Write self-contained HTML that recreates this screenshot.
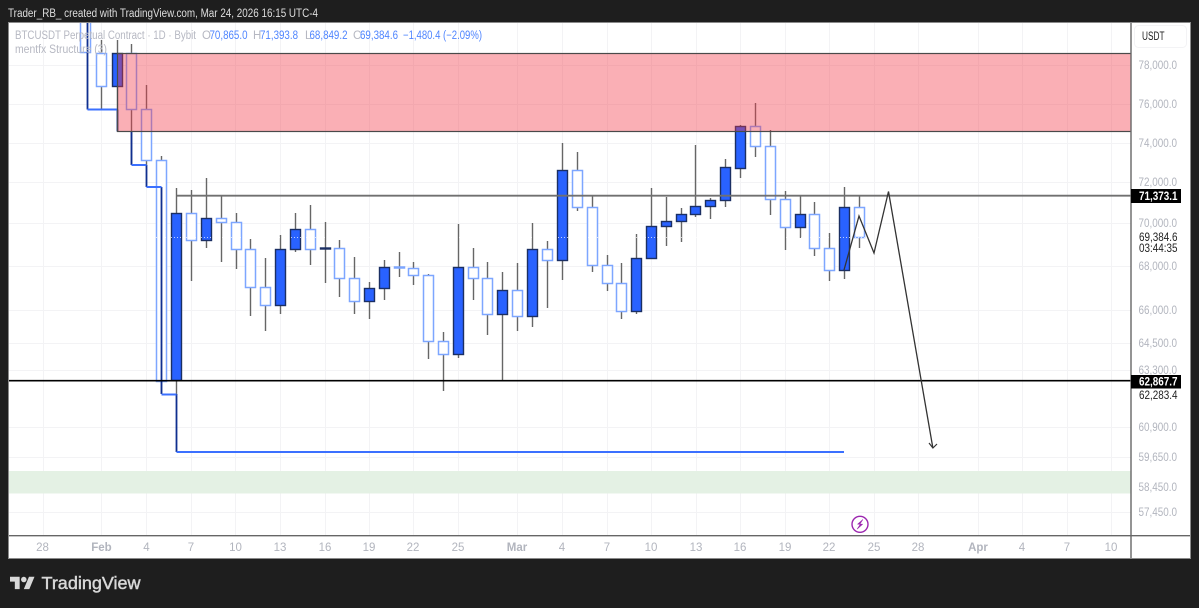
<!DOCTYPE html>
<html>
<head>
<meta charset="utf-8">
<title>BTCUSDT chart</title>
<style>
html,body{margin:0;padding:0;background:#1e1e1e;width:1199px;height:608px;overflow:hidden}
svg{display:block;filter:blur(.3px)}
text{font-family:"Liberation Sans",sans-serif}
.p{font-size:11.5px;fill:#b2b5be}
.t{font-size:11.5px;fill:#b2b5be;text-anchor:middle}
.tb{font-size:11.5px;fill:#b2b5be;text-anchor:middle;font-weight:bold}
.l{font-size:11.5px;fill:#b6b8c2}
.v{font-size:11.5px;fill:#4f85ff}
</style>
</head>
<body>
<svg width="1199" height="608" viewBox="0 0 1199 608" xmlns="http://www.w3.org/2000/svg">
<defs><clipPath id="c"><rect x="9" y="23" width="1122" height="512"/></clipPath></defs>
<rect width="1199" height="608" fill="#1e1e1e"/>
<text x="8" y="17" font-size="11.5" fill="#dedede" textLength="310" lengthAdjust="spacingAndGlyphs">Trader_RB_ created with TradingView.com, Mar 24, 2026 16:15 UTC-4</text>
<rect x="8.5" y="22.5" width="1182" height="536" fill="#fff" stroke="#8a8a8a"/>

<path d="M9 65.5H1131M9 104.5H1131M9 143.5H1131M9 182.5H1131M9 223.5H1131M9 266.5H1131M9 310.5H1131M9 343.5H1131M9 370.5H1131M9 427.5H1131M9 457.5H1131M9 487.5H1131M9 512.5H1131M43.5 23V535M101.5 23V535M146.5 23V535M191.5 23V535M235.5 23V535M280.5 23V535M325.5 23V535M369.5 23V535M413.5 23V535M458.5 23V535M517.5 23V535M562.5 23V535M607.5 23V535M651.5 23V535M696.5 23V535M740.5 23V535M785.5 23V535M829.5 23V535M874.5 23V535M918.5 23V535M978.5 23V535M1022.5 23V535M1067.5 23V535M1111.5 23V535" stroke="#f3f3f5" fill="none"/>

<rect x="9" y="471" width="1122" height="22.5" fill="#e4f1e4"/>

<g clip-path="url(#c)">
<!-- wicks -->
<path d="M101.5 40V109M117.5 40V131M131.5 44V165M146.5 85V165M161.5 156V394M176.5 188V395M191.5 190V281M206.5 178V248M221.5 195V262M236.5 213V269M250.5 239V316M265.5 258V331M280.5 235V314M295.5 213V252M310.5 205V265M325.5 222V283M339.5 240V297M354.5 257V314M369.5 282V319M384.5 260V300M399.5 252V277M413.5 262V285M428.5 274V359M443.5 332V391M458.5 224V358M473.5 248V300M487.5 262V335M502.5 272V380M517.5 263V331M532.5 223V327M547.5 241V308M562.5 143V280M577.5 152V211M592.5 196V272M607.5 255V291M621.5 263V319M636.5 234V314M651.5 188V259M666.5 197V246M681.5 208V242M695.5 145V217M710.5 198V219M725.5 159V207M740.5 125V178M755.5 103V157M770.5 130V215M785.5 191V250M800.5 196V238M814.5 202V256M829.5 233V281M844.5 187V279M859.5 195V248" stroke="#666" stroke-width="1.4" fill="none"/>
<!-- hollow -->
<g fill="#fff" stroke="#7da6ff" stroke-width="1.5">
<rect x="80.5" y="15.5" width="10" height="37"/>
<rect x="96.5" y="53.5" width="10" height="33"/>
<rect x="126.5" y="53.5" width="10" height="56"/>
<rect x="141.5" y="109.5" width="10" height="51"/>
<rect x="156.5" y="160.5" width="10" height="221"/>
<rect x="186.5" y="213.5" width="10" height="27"/>
<rect x="216.5" y="218.5" width="10" height="4"/>
<rect x="231.5" y="222.5" width="10" height="27"/>
<rect x="245.5" y="249.5" width="10" height="38"/>
<rect x="260.5" y="287.5" width="10" height="18"/>
<rect x="305.5" y="229.5" width="10" height="20"/>
<rect x="334.5" y="248.5" width="10" height="30"/>
<rect x="349.5" y="278.5" width="10" height="23"/>
<rect x="394.5" y="267" width="10" height="1"/>
<rect x="408.5" y="268.5" width="10" height="7"/>
<rect x="423.5" y="275.5" width="10" height="66"/>
<rect x="438.5" y="341.5" width="10" height="13"/>
<rect x="468.5" y="267.5" width="10" height="11"/>
<rect x="482.5" y="278.5" width="10" height="36"/>
<rect x="512.5" y="290.5" width="10" height="26"/>
<rect x="542.5" y="249.5" width="10" height="11"/>
<rect x="572.5" y="170.5" width="10" height="37"/>
<rect x="587.5" y="207.5" width="10" height="58"/>
<rect x="602.5" y="265.5" width="10" height="18"/>
<rect x="616.5" y="283.5" width="10" height="28"/>
<rect x="750.5" y="126.5" width="10" height="20"/>
<rect x="765.5" y="146.5" width="10" height="53"/>
<rect x="780.5" y="199.5" width="10" height="28"/>
<rect x="809.5" y="214.5" width="10" height="34"/>
<rect x="824.5" y="248.5" width="10" height="22"/>
<rect x="854.5" y="207.5" width="10" height="30"/>
</g>
<!-- filled -->
<g fill="#2962ff" stroke="#1b2f63" stroke-width="1.4">
<rect x="112.5" y="53.5" width="10" height="33"/>
<rect x="171.5" y="213.5" width="10" height="167"/>
<rect x="201.5" y="218.5" width="10" height="22"/>
<rect x="275.5" y="249.5" width="10" height="56"/>
<rect x="290.5" y="229.5" width="10" height="20"/>
<rect x="320.5" y="248" width="10" height="1"/>
<rect x="364.5" y="288.5" width="10" height="13"/>
<rect x="379.5" y="267.5" width="10" height="21"/>
<rect x="453.5" y="267.5" width="10" height="87"/>
<rect x="497.5" y="290.5" width="10" height="24"/>
<rect x="527.5" y="249.5" width="10" height="67"/>
<rect x="557.5" y="170.5" width="10" height="90"/>
<rect x="631.5" y="258.5" width="10" height="53"/>
<rect x="646.5" y="226.5" width="10" height="32"/>
<rect x="661.5" y="221.5" width="10" height="5"/>
<rect x="676.5" y="214.5" width="10" height="7"/>
<rect x="690.5" y="206.5" width="10" height="8"/>
<rect x="705.5" y="200.5" width="10" height="6"/>
<rect x="720.5" y="167.5" width="10" height="33"/>
<rect x="735.5" y="126.5" width="10" height="42"/>
<rect x="795.5" y="214.5" width="10" height="13"/>
<rect x="839.5" y="207.5" width="10" height="63"/>
</g>
<path d="M9 237.5H1131" stroke="#fff" stroke-width="1" stroke-dasharray="1 2" opacity=".7"/>

<!-- structure step line -->
<path d="M87.5 23V109.5M117.5 109.5V131.5M131.5 131.5V165M146.5 165V187M161.5 187V394M176.5 394V452" stroke="#0f2f8f" stroke-width="1.8" fill="none"/>
<path d="M87.5 109.5H117.5M131.5 165H146.5M146.5 187H161.5M161.5 394.5H176.5M176.5 452H844" stroke="#3b70ff" stroke-width="2" fill="none"/>

<!-- supply zone -->
<rect x="117.5" y="53.5" width="1015" height="78" fill="#f23645" fill-opacity=".4" stroke="#4a4a4a" stroke-width="1.2"/>

<!-- levels -->
<path d="M177 195.7H1131" stroke="#707070" stroke-width="1.9"/>
<path d="M9 380.7H1131" stroke="#000" stroke-width="1.7"/>

<!-- projection -->
<path d="M844 270L859 216L874 253L888.5 191.5L932.7 447" stroke="#333" stroke-width="1.3" fill="none"/>
<path d="M929 443L932.9 448L937 444" stroke="#333" stroke-width="1.2" fill="none"/>
</g>

<!-- legend -->
<text class="l" x="15" y="39" textLength="181" lengthAdjust="spacingAndGlyphs">BTCUSDT Perpetual Contract · 1D · Bybit</text>
<text class="l" x="202" y="39">O</text><text class="v" x="209.5" y="39" textLength="38" lengthAdjust="spacingAndGlyphs">70,865.0</text>
<text class="l" x="253" y="39">H</text><text class="v" x="260" y="39" textLength="38" lengthAdjust="spacingAndGlyphs">71,393.8</text>
<text class="l" x="305" y="39">L</text><text class="v" x="309.5" y="39" textLength="38" lengthAdjust="spacingAndGlyphs">68,849.2</text>
<text class="l" x="353" y="39">C</text><text class="v" x="360" y="39" textLength="38" lengthAdjust="spacingAndGlyphs">69,384.6</text>
<text class="v" x="403" y="39" textLength="79" lengthAdjust="spacingAndGlyphs">−1,480.4 (−2.09%)</text>
<text class="l" x="15" y="53" textLength="92" lengthAdjust="spacingAndGlyphs">mentfx Structure (3)</text>

<!-- axes -->
<path d="M1131 23V558" stroke="#666" stroke-width="1.4"/>
<path d="M9 535.7H1190" stroke="#666" stroke-width="1.4"/>

<rect x="1134.5" y="25.5" width="52" height="22" rx="4" fill="#fff" stroke="#f3f3f5"/>
<text x="1142" y="40" font-size="11.5" fill="#222" textLength="22.5" lengthAdjust="spacingAndGlyphs">USDT</text>

<g>
<text class="p" x="1138.5" y="69" textLength="38.5" lengthAdjust="spacingAndGlyphs">78,000.0</text>
<text class="p" x="1138.5" y="108" textLength="38.5" lengthAdjust="spacingAndGlyphs">76,000.0</text>
<text class="p" x="1138.5" y="147" textLength="38.5" lengthAdjust="spacingAndGlyphs">74,000.0</text>
<text class="p" x="1138.5" y="186" textLength="38.5" lengthAdjust="spacingAndGlyphs">72,000.0</text>
<text class="p" x="1138.5" y="227" textLength="38.5" lengthAdjust="spacingAndGlyphs">70,000.0</text>
<text class="p" x="1138.5" y="270" textLength="38.5" lengthAdjust="spacingAndGlyphs">68,000.0</text>
<text class="p" x="1138.5" y="314" textLength="38.5" lengthAdjust="spacingAndGlyphs">66,000.0</text>
<text class="p" x="1138.5" y="347" textLength="38.5" lengthAdjust="spacingAndGlyphs">64,500.0</text>
<text class="p" x="1138.5" y="374" textLength="38.5" lengthAdjust="spacingAndGlyphs">63,300.0</text>
<text class="p" x="1138.5" y="431" textLength="38.5" lengthAdjust="spacingAndGlyphs">60,900.0</text>
<text class="p" x="1138.5" y="461" textLength="38.5" lengthAdjust="spacingAndGlyphs">59,650.0</text>
<text class="p" x="1138.5" y="491" textLength="38.5" lengthAdjust="spacingAndGlyphs">58,450.0</text>
<text class="p" x="1138.5" y="516" textLength="38.5" lengthAdjust="spacingAndGlyphs">57,450.0</text>
</g>
<text x="1139" y="241" font-size="11.5" fill="#222" textLength="38.5" lengthAdjust="spacingAndGlyphs">69,384.6</text>
<text x="1139" y="252" font-size="11.5" fill="#222" textLength="38.5" lengthAdjust="spacingAndGlyphs">03:44:35</text>
<text x="1139" y="399" font-size="11.5" fill="#222" textLength="38.5" lengthAdjust="spacingAndGlyphs">62,283.4</text>

<rect x="1131" y="189" width="50" height="14" fill="#000"/>
<text x="1139" y="200" font-size="11.5" font-weight="bold" fill="#fff" textLength="38.5" lengthAdjust="spacingAndGlyphs">71,373.1</text>
<rect x="1131" y="375" width="50" height="13.5" fill="#000"/>
<text x="1139" y="385.5" font-size="11.5" font-weight="bold" fill="#fff" textLength="38.5" lengthAdjust="spacingAndGlyphs">62,867.7</text>

<!-- time axis -->
<text class="t" x="42.5" y="551">28</text>
<text class="tb" x="101.5" y="551">Feb</text>
<text class="t" x="146.5" y="551">4</text>
<text class="t" x="191" y="551">7</text>
<text class="t" x="235.5" y="551">10</text>
<text class="t" x="280" y="551">13</text>
<text class="t" x="325" y="551">16</text>
<text class="t" x="369" y="551">19</text>
<text class="t" x="413" y="551">22</text>
<text class="t" x="458" y="551">25</text>
<text class="tb" x="517" y="551">Mar</text>
<text class="t" x="562" y="551">4</text>
<text class="t" x="607" y="551">7</text>
<text class="t" x="651" y="551">10</text>
<text class="t" x="696" y="551">13</text>
<text class="t" x="740" y="551">16</text>
<text class="t" x="785" y="551">19</text>
<text class="t" x="829" y="551">22</text>
<text class="t" x="874" y="551">25</text>
<text class="t" x="918" y="551">28</text>
<text class="tb" x="978" y="551">Apr</text>
<text class="t" x="1022" y="551">4</text>
<text class="t" x="1067" y="551">7</text>
<text class="t" x="1111" y="551">10</text>

<!-- bolt marker -->
<circle cx="860" cy="524.3" r="8" fill="#fff" stroke="#9c27b0" stroke-width="1.4"/>
<path d="M862.8 519.6L857.6 524.2H860.4L857.2 529L862.6 524.2H859.8Z" fill="#9c27b0" stroke="#9c27b0" stroke-width=".6" stroke-linejoin="round"/>

<!-- logo -->
<g transform="translate(10 574) scale(.69)" fill="#d8d8d8">
<path d="M14 22H7V11H0V4h14v18zM28 22h-8l7.5-18h8L28 22z"/>
<circle cx="20" cy="8" r="4"/>
</g>
<text x="41.5" y="589" font-size="17.5" fill="#d8d8d8" stroke="#d8d8d8" stroke-width=".45" textLength="99" lengthAdjust="spacingAndGlyphs">TradingView</text>
</svg>
</body>
</html>
